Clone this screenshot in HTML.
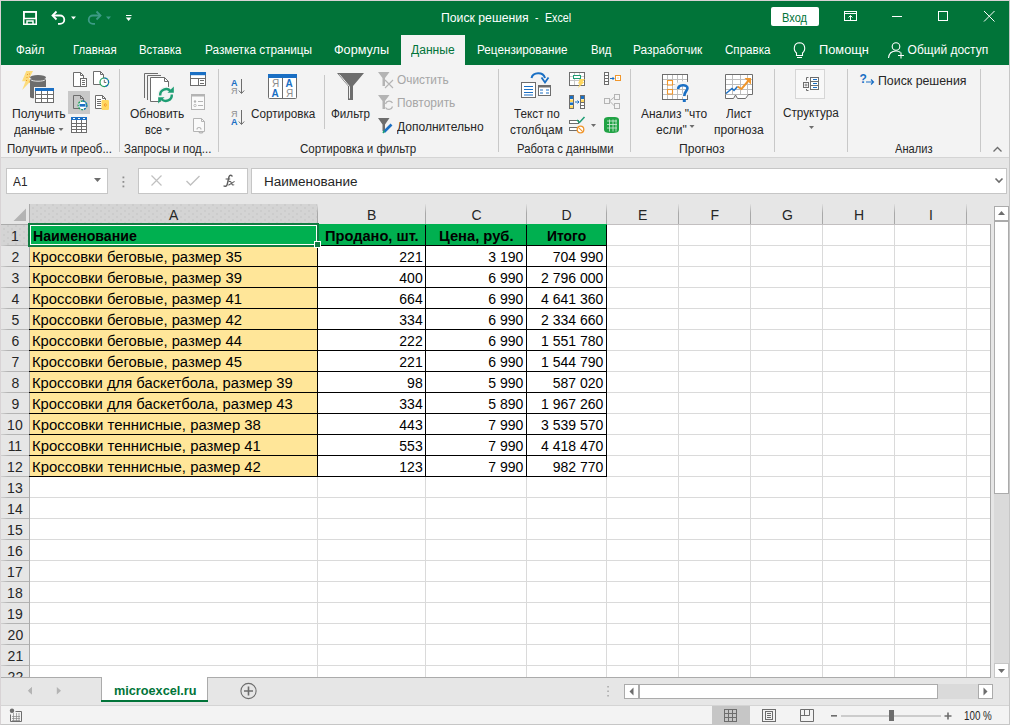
<!DOCTYPE html>
<html><head><meta charset="utf-8"><title>Excel</title><style>
*{margin:0;padding:0;box-sizing:border-box}
html,body{width:1010px;height:725px;overflow:hidden;background:#f3f3f3;font-family:"Liberation Sans",sans-serif}
.a{position:absolute}
.t{position:absolute;white-space:pre;line-height:1.117;transform-origin:0 0}
</style></head>
<body>
<div class="a" style="left:0px;top:0px;width:1010px;height:725px;background:#f3f3f3;border:1px solid #d8d3d5;border-right-color:#c6c6c6;border-bottom-color:#c6c6c6"></div>
<div class="a" style="left:1px;top:1px;width:1008px;height:64px;background:#017439"></div>
<div class="a" style="left:401px;top:35px;width:64px;height:30px;background:#f3f3f3"></div>
<div class="a" style="left:771px;top:7px;width:48px;height:19px;background:#fff;border-radius:2px"></div>
<div class="a" style="left:1px;top:157px;width:1008px;height:1px;background:#d4d4d4"></div>
<div class="a" style="left:1px;top:158px;width:1008px;height:519px;background:#e6e6e6"></div>
<div class="a" style="left:119px;top:69px;width:1px;height:83px;background:#c8c8c8"></div>
<div class="a" style="left:218px;top:69px;width:1px;height:83px;background:#c8c8c8"></div>
<div class="a" style="left:498px;top:69px;width:1px;height:83px;background:#c8c8c8"></div>
<div class="a" style="left:630px;top:69px;width:1px;height:83px;background:#c8c8c8"></div>
<div class="a" style="left:774px;top:69px;width:1px;height:83px;background:#c8c8c8"></div>
<div class="a" style="left:847px;top:69px;width:1px;height:83px;background:#c8c8c8"></div>
<div class="a" style="left:980px;top:69px;width:1px;height:83px;background:#c8c8c8"></div>
<div class="a" style="left:324px;top:75px;width:1px;height:54px;background:#c8c8c8"></div>
<div class="a" style="left:6px;top:168px;width:102px;height:26px;background:#fff;border:1px solid #c6c6c6"></div>
<div class="a" style="left:138px;top:168px;width:110px;height:26px;background:#fff;border:1px solid #c6c6c6"></div>
<div class="a" style="left:251px;top:168px;width:756px;height:26px;background:#fff;border:1px solid #c6c6c6"></div>
<div class="a" style="left:30px;top:225px;width:960px;height:452px;background:#fff"></div>
<div class="a" style="left:30px;top:204px;width:287px;height:20px;background-color:#d4d4d4;background-image:radial-gradient(circle at 1px 1px,#c2c2c2 0.6px,transparent 0.8px),radial-gradient(circle at 1px 1px,#c2c2c2 0.6px,transparent 0.8px);background-size:8px 6px,8px 6px;background-position:2px 3px,6px 6px"></div>
<div class="a" style="left:1px;top:225px;width:28px;height:20px;background-color:#d4d4d4;background-image:radial-gradient(circle at 1px 1px,#c2c2c2 0.6px,transparent 0.8px),radial-gradient(circle at 1px 1px,#c2c2c2 0.6px,transparent 0.8px);background-size:8px 6px,8px 6px;background-position:2px 3px,6px 6px"></div>
<div class="a" style="left:317px;top:225px;width:1px;height:452px;background:#dadada"></div>
<div class="a" style="left:317px;top:204px;width:1px;height:20px;background:linear-gradient(#e0e0e0,#a8a8a8 45%,#a8a8a8)"></div>
<div class="a" style="left:425px;top:225px;width:1px;height:452px;background:#dadada"></div>
<div class="a" style="left:425px;top:204px;width:1px;height:20px;background:linear-gradient(#e0e0e0,#a8a8a8 45%,#a8a8a8)"></div>
<div class="a" style="left:526px;top:225px;width:1px;height:452px;background:#dadada"></div>
<div class="a" style="left:526px;top:204px;width:1px;height:20px;background:linear-gradient(#e0e0e0,#a8a8a8 45%,#a8a8a8)"></div>
<div class="a" style="left:606px;top:225px;width:1px;height:452px;background:#dadada"></div>
<div class="a" style="left:606px;top:204px;width:1px;height:20px;background:linear-gradient(#e0e0e0,#a8a8a8 45%,#a8a8a8)"></div>
<div class="a" style="left:678px;top:225px;width:1px;height:452px;background:#dadada"></div>
<div class="a" style="left:678px;top:204px;width:1px;height:20px;background:linear-gradient(#e0e0e0,#a8a8a8 45%,#a8a8a8)"></div>
<div class="a" style="left:750px;top:225px;width:1px;height:452px;background:#dadada"></div>
<div class="a" style="left:750px;top:204px;width:1px;height:20px;background:linear-gradient(#e0e0e0,#a8a8a8 45%,#a8a8a8)"></div>
<div class="a" style="left:822px;top:225px;width:1px;height:452px;background:#dadada"></div>
<div class="a" style="left:822px;top:204px;width:1px;height:20px;background:linear-gradient(#e0e0e0,#a8a8a8 45%,#a8a8a8)"></div>
<div class="a" style="left:894px;top:225px;width:1px;height:452px;background:#dadada"></div>
<div class="a" style="left:894px;top:204px;width:1px;height:20px;background:linear-gradient(#e0e0e0,#a8a8a8 45%,#a8a8a8)"></div>
<div class="a" style="left:966px;top:225px;width:1px;height:452px;background:#dadada"></div>
<div class="a" style="left:966px;top:204px;width:1px;height:20px;background:linear-gradient(#e0e0e0,#a8a8a8 45%,#a8a8a8)"></div>
<div class="a" style="left:30px;top:245px;width:960px;height:1px;background:#dadada"></div>
<div class="a" style="left:1px;top:245px;width:28px;height:1px;background:linear-gradient(90deg,#d0d0d0,#b4b4b4 25%,#b4b4b4)"></div>
<div class="a" style="left:30px;top:266px;width:960px;height:1px;background:#dadada"></div>
<div class="a" style="left:1px;top:266px;width:28px;height:1px;background:linear-gradient(90deg,#d0d0d0,#b4b4b4 25%,#b4b4b4)"></div>
<div class="a" style="left:30px;top:287px;width:960px;height:1px;background:#dadada"></div>
<div class="a" style="left:1px;top:287px;width:28px;height:1px;background:linear-gradient(90deg,#d0d0d0,#b4b4b4 25%,#b4b4b4)"></div>
<div class="a" style="left:30px;top:308px;width:960px;height:1px;background:#dadada"></div>
<div class="a" style="left:1px;top:308px;width:28px;height:1px;background:linear-gradient(90deg,#d0d0d0,#b4b4b4 25%,#b4b4b4)"></div>
<div class="a" style="left:30px;top:329px;width:960px;height:1px;background:#dadada"></div>
<div class="a" style="left:1px;top:329px;width:28px;height:1px;background:linear-gradient(90deg,#d0d0d0,#b4b4b4 25%,#b4b4b4)"></div>
<div class="a" style="left:30px;top:350px;width:960px;height:1px;background:#dadada"></div>
<div class="a" style="left:1px;top:350px;width:28px;height:1px;background:linear-gradient(90deg,#d0d0d0,#b4b4b4 25%,#b4b4b4)"></div>
<div class="a" style="left:30px;top:371px;width:960px;height:1px;background:#dadada"></div>
<div class="a" style="left:1px;top:371px;width:28px;height:1px;background:linear-gradient(90deg,#d0d0d0,#b4b4b4 25%,#b4b4b4)"></div>
<div class="a" style="left:30px;top:392px;width:960px;height:1px;background:#dadada"></div>
<div class="a" style="left:1px;top:392px;width:28px;height:1px;background:linear-gradient(90deg,#d0d0d0,#b4b4b4 25%,#b4b4b4)"></div>
<div class="a" style="left:30px;top:413px;width:960px;height:1px;background:#dadada"></div>
<div class="a" style="left:1px;top:413px;width:28px;height:1px;background:linear-gradient(90deg,#d0d0d0,#b4b4b4 25%,#b4b4b4)"></div>
<div class="a" style="left:30px;top:434px;width:960px;height:1px;background:#dadada"></div>
<div class="a" style="left:1px;top:434px;width:28px;height:1px;background:linear-gradient(90deg,#d0d0d0,#b4b4b4 25%,#b4b4b4)"></div>
<div class="a" style="left:30px;top:455px;width:960px;height:1px;background:#dadada"></div>
<div class="a" style="left:1px;top:455px;width:28px;height:1px;background:linear-gradient(90deg,#d0d0d0,#b4b4b4 25%,#b4b4b4)"></div>
<div class="a" style="left:30px;top:476px;width:960px;height:1px;background:#dadada"></div>
<div class="a" style="left:1px;top:476px;width:28px;height:1px;background:linear-gradient(90deg,#d0d0d0,#b4b4b4 25%,#b4b4b4)"></div>
<div class="a" style="left:30px;top:497px;width:960px;height:1px;background:#dadada"></div>
<div class="a" style="left:1px;top:497px;width:28px;height:1px;background:linear-gradient(90deg,#d0d0d0,#b4b4b4 25%,#b4b4b4)"></div>
<div class="a" style="left:30px;top:518px;width:960px;height:1px;background:#dadada"></div>
<div class="a" style="left:1px;top:518px;width:28px;height:1px;background:linear-gradient(90deg,#d0d0d0,#b4b4b4 25%,#b4b4b4)"></div>
<div class="a" style="left:30px;top:539px;width:960px;height:1px;background:#dadada"></div>
<div class="a" style="left:1px;top:539px;width:28px;height:1px;background:linear-gradient(90deg,#d0d0d0,#b4b4b4 25%,#b4b4b4)"></div>
<div class="a" style="left:30px;top:560px;width:960px;height:1px;background:#dadada"></div>
<div class="a" style="left:1px;top:560px;width:28px;height:1px;background:linear-gradient(90deg,#d0d0d0,#b4b4b4 25%,#b4b4b4)"></div>
<div class="a" style="left:30px;top:581px;width:960px;height:1px;background:#dadada"></div>
<div class="a" style="left:1px;top:581px;width:28px;height:1px;background:linear-gradient(90deg,#d0d0d0,#b4b4b4 25%,#b4b4b4)"></div>
<div class="a" style="left:30px;top:602px;width:960px;height:1px;background:#dadada"></div>
<div class="a" style="left:1px;top:602px;width:28px;height:1px;background:linear-gradient(90deg,#d0d0d0,#b4b4b4 25%,#b4b4b4)"></div>
<div class="a" style="left:30px;top:623px;width:960px;height:1px;background:#dadada"></div>
<div class="a" style="left:1px;top:623px;width:28px;height:1px;background:linear-gradient(90deg,#d0d0d0,#b4b4b4 25%,#b4b4b4)"></div>
<div class="a" style="left:30px;top:644px;width:960px;height:1px;background:#dadada"></div>
<div class="a" style="left:1px;top:644px;width:28px;height:1px;background:linear-gradient(90deg,#d0d0d0,#b4b4b4 25%,#b4b4b4)"></div>
<div class="a" style="left:30px;top:665px;width:960px;height:1px;background:#dadada"></div>
<div class="a" style="left:1px;top:665px;width:28px;height:1px;background:linear-gradient(90deg,#d0d0d0,#b4b4b4 25%,#b4b4b4)"></div>
<div class="a" style="left:30px;top:686px;width:960px;height:1px;background:#dadada"></div>
<div class="a" style="left:1px;top:686px;width:28px;height:1px;background:linear-gradient(90deg,#d0d0d0,#b4b4b4 25%,#b4b4b4)"></div>
<div class="a" style="left:1px;top:224px;width:989px;height:1px;background:#c2bfc0"></div>
<div class="a" style="left:1px;top:224px;width:28px;height:1px;background:#ababab"></div>
<div class="a" style="left:29px;top:204px;width:1px;height:473px;background:#ababab"></div>
<div class="a" style="left:990px;top:224px;width:1px;height:453px;background:#ababab"></div>
<div class="a" style="left:29px;top:224px;width:578px;height:22px;background:#00b050"></div>
<div class="a" style="left:30px;top:246px;width:287px;height:231px;background:#ffe699"></div>
<div class="a" style="left:29px;top:245px;width:578px;height:1px;background:#000"></div>
<div class="a" style="left:29px;top:266px;width:578px;height:1px;background:#000"></div>
<div class="a" style="left:29px;top:287px;width:578px;height:1px;background:#000"></div>
<div class="a" style="left:29px;top:308px;width:578px;height:1px;background:#000"></div>
<div class="a" style="left:29px;top:329px;width:578px;height:1px;background:#000"></div>
<div class="a" style="left:29px;top:350px;width:578px;height:1px;background:#000"></div>
<div class="a" style="left:29px;top:371px;width:578px;height:1px;background:#000"></div>
<div class="a" style="left:29px;top:392px;width:578px;height:1px;background:#000"></div>
<div class="a" style="left:29px;top:413px;width:578px;height:1px;background:#000"></div>
<div class="a" style="left:29px;top:434px;width:578px;height:1px;background:#000"></div>
<div class="a" style="left:29px;top:455px;width:578px;height:1px;background:#000"></div>
<div class="a" style="left:29px;top:476px;width:578px;height:1px;background:#000"></div>
<div class="a" style="left:317px;top:225px;width:1px;height:252px;background:#000"></div>
<div class="a" style="left:425px;top:225px;width:1px;height:252px;background:#000"></div>
<div class="a" style="left:526px;top:225px;width:1px;height:252px;background:#000"></div>
<div class="a" style="left:606px;top:225px;width:1px;height:252px;background:#000"></div>
<div class="a" style="left:28px;top:223px;width:291px;height:24px;border:2px solid #107c41;"></div>
<div class="a" style="left:30px;top:225px;width:287px;height:20px;border:1px solid #fff"></div>
<div class="a" style="left:315px;top:242px;width:5px;height:5px;background:#107c41;outline:1px solid #fff"></div>
<svg class="a" style="left:0;top:196px" width="30" height="28"><path d="M13.5 25 L26 12.5 L26 25 Z" fill="#b4b4b4"/></svg>
<div class="a" style="left:994px;top:206px;width:15px;height:471px;background:#dadada"></div>
<div class="a" style="left:994px;top:206px;width:15px;height:15px;background:#fff;border:1px solid #ababab"></div>
<div class="a" style="left:994px;top:221px;width:15px;height:273px;background:#fff;border:1px solid #ababab"></div>
<div class="a" style="left:994px;top:663px;width:15px;height:15px;background:#fff;border:1px solid #c6c6c6"></div>
<div class="a" style="left:1px;top:677px;width:990px;height:1px;background:#ababab"></div>
<div class="a" style="left:1px;top:678px;width:1008px;height:27px;background:#e6e6e6"></div>
<div class="a" style="left:991px;top:677px;width:3px;height:1px;background:#e6e6e6"></div>
<div class="a" style="left:101px;top:677px;width:107px;height:25px;background:#fff;border:1px solid #ababab;border-top:none"></div>
<div class="a" style="left:101px;top:700px;width:107px;height:2px;background:#017439"></div>
<div class="a" style="left:624px;top:684px;width:369px;height:15px;background:#dadada"></div>
<div class="a" style="left:624px;top:684px;width:15px;height:15px;background:#fff;border:1px solid #ababab"></div>
<div class="a" style="left:639px;top:684px;width:299px;height:15px;background:#fff;border:1px solid #ababab"></div>
<div class="a" style="left:978px;top:684px;width:15px;height:15px;background:#fff;border:1px solid #ababab"></div>
<div class="a" style="left:1px;top:705px;width:1008px;height:1px;background:#d4d4d4"></div>
<div class="a" style="left:1px;top:706px;width:1008px;height:18px;background:#f3f3f3"></div>
<div class="a" style="left:712px;top:706px;width:38px;height:18px;background:#c6c6c6"></div>
<svg class="a" style="left:0;top:0" width="1010" height="725"><rect x="23.75" y="11.75" width="12.5" height="12.5" fill="none" stroke="#ffffff" stroke-width="1.5"/><rect x="24" y="12" width="12" height="6.5" fill="none" stroke="#ffffff" stroke-width="1.5"/><path d="M27 25 V21 H33 V25" fill="none" stroke="#ffffff" stroke-width="1.5"/><path d="M53 15.5 H60 A4.3 4.2 0 0 1 60 23.9 H58" fill="none" stroke="#ffffff" stroke-width="1.8"/><path d="M56.5 11.5 L52.5 15.5 L56.5 19.5" fill="none" stroke="#ffffff" stroke-width="1.8"/><path d="M71 16.5 H76 L73.5 19.5 Z" fill="#ffffff"/><path d="M100 15.5 H93 A4.3 4.2 0 0 0 93 23.9 H95" fill="none" stroke="#3d9b86" stroke-width="1.8"/><path d="M96.5 11.5 L100.5 15.5 L96.5 19.5" fill="none" stroke="#3d9b86" stroke-width="1.8"/><path d="M106 16.5 H111 L108.5 19.5 Z" fill="#3d9b86"/><rect x="126" y="15" width="5.5" height="1" fill="#ffffff"/><path d="M125.8 17.5 H131.5 L128.65 21 Z" fill="#ffffff"/><rect x="844.5" y="11.5" width="12" height="9" fill="none" stroke="#ffffff" stroke-width="1"/><rect x="844.5" y="13" width="12" height="1" fill="#ffffff"/><path d="M850.5 20 V15.5 M848.5 17.5 L850.5 15.5 L852.5 17.5" fill="none" stroke="#ffffff" stroke-width="1"/><rect x="892" y="16" width="10" height="1" fill="#ffffff"/><rect x="938.5" y="11.5" width="9" height="9" fill="none" stroke="#ffffff" stroke-width="1"/><path d="M984 11 L994.5 21.5 M994.5 11 L984 21.5" fill="none" stroke="#ffffff" stroke-width="1"/><path d="M796.5 53 C793 50 793.5 43 799.5 42.8 C805.5 43 806 50 802.5 53 V55.5 H796.5 Z" fill="none" stroke="#ffffff" stroke-width="1.1"/><path d="M797 57.5 H802" stroke="#ffffff" stroke-width="1"/><circle cx="896" cy="46.5" r="3.8" fill="none" stroke="#ffffff" stroke-width="1.1"/><path d="M888.5 58 C889 53 892 51 896 51 C898 51 899.5 51.5 900.5 52.5" fill="none" stroke="#ffffff" stroke-width="1.1"/><path d="M898 55.5 H904 M901 52.5 V58.5" stroke="#ffffff" stroke-width="1.1"/><path d="M26.3 71 H33 L28.8 79.3 H32.5 L22.2 90 L25.6 81.2 H22 Z" fill="#fcdc7c"/><rect x="27" y="74" width="1" height="1" fill="#f0962c"/><rect x="29" y="73.5" width="1" height="1" fill="#f0962c"/><rect x="26.5" y="77" width="1" height="1" fill="#f0962c"/><rect x="29" y="76.5" width="1" height="1" fill="#f0962c"/><rect x="26" y="80" width="1" height="1" fill="#f0962c"/><rect x="29" y="81.5" width="1" height="1" fill="#f0962c"/><path d="M30 79 V97 C30 99 46 99 46 97 V79 Z" fill="#6d6d6d"/><ellipse cx="38" cy="77.5" rx="8" ry="2.6" fill="#6d6d6d"/><path d="M30.5 79.5 C32 81.8 44 81.8 45.5 79.5" fill="none" stroke="#fff" stroke-width="0.8"/><rect x="34" y="87" width="21" height="17" fill="#f3f3f3"/><rect x="35.5" y="88.5" width="18" height="14" fill="#fff" stroke="#6d6d6d" stroke-width="1"/><rect x="35" y="88" width="19" height="3" fill="#1a6fc4"/><path d="M41.5 91 V102 M47.5 91 V102 M36 94.5 H53 M36 98.5 H53" stroke="#6d6d6d" stroke-width="1"/><path d="M73.5 72.5 H80.5 L83.5 75.5 V86.5 H73.5 Z" fill="#fff" stroke="#6d6d6d" stroke-width="1"/><path d="M80.5 72.5 V75.5 H83.5" fill="none" stroke="#6d6d6d" stroke-width="1"/><rect x="80.5" y="78.5" width="6" height="8" fill="#fff" stroke="#6d6d6d" stroke-width="1"/><path d="M82 80.5 H85 M82 82.5 H85 M82 84.5 H85" stroke="#6d6d6d" stroke-width="1"/><path d="M93.5 71.5 H100.5 L103.5 74.5 V84.5 H93.5 Z" fill="#fff" stroke="#6d6d6d" stroke-width="1"/><path d="M100.5 71.5 V74.5 H103.5" fill="none" stroke="#6d6d6d" stroke-width="1"/><circle cx="104.3" cy="82.3" r="4.3" fill="#fff" stroke="#21a05a" stroke-width="1.2"/><path d="M104.3 78 A4.3 4.3 0 0 1 104.3 86.6" fill="none" stroke="#1a6fc4" stroke-width="1.2" stroke-dasharray="3 1.5"/><path d="M104.3 79.8 V82.5 H106.3" fill="none" stroke="#6d6d6d" stroke-width="1"/><rect x="68" y="91" width="22" height="23" fill="#c8c8c8"/><path d="M73.5 95.5 H80.5 L83.5 98.5 V108.5 H73.5 Z" fill="#c8c8c8" stroke="#6d6d6d" stroke-width="1"/><path d="M80.5 95.5 V98.5 H83.5" fill="none" stroke="#6d6d6d" stroke-width="1"/><circle cx="82.5" cy="105.3" r="4.3" fill="#fff" stroke="#21a05a" stroke-width="1.3" stroke-dasharray="2 1"/><path d="M82.5 101 A4.3 4.3 0 0 1 82.5 109.6" fill="none" stroke="#1a6fc4" stroke-width="1.3" stroke-dasharray="2 1.2"/><rect x="79.5" y="104" width="6" height="2.6" fill="#1a6fc4"/><path d="M95.5 95.5 H102.5 L105.5 98.5 V108.5 H95.5 Z" fill="#fff" stroke="#6d6d6d" stroke-width="1"/><path d="M102.5 95.5 V98.5 H105.5" fill="none" stroke="#6d6d6d" stroke-width="1"/><path d="M97 99.5 H101 M97 101.5 H101 M97 103.5 H101 M97 105.5 H101" stroke="#6d6d6d" stroke-width="1"/><rect x="101.5" y="100" width="7.5" height="10" rx="1.2" fill="#ffd75e"/><path d="M105.3 103.5 L106.5 105 L105.3 106.5 L104.1 105 Z" fill="none" stroke="#f0962c" stroke-width="0.9"/><rect x="71.5" y="117.5" width="15" height="15" fill="#fff" stroke="#6d6d6d" stroke-width="1"/><rect x="71" y="117" width="16" height="3" fill="#1a6fc4"/><path d="M76.5 120 V132 M81.5 120 V132 M72 123.5 H86 M72 126.5 H86 M72 129.5 H86" stroke="#6d6d6d" stroke-width="1"/><path d="M73 118.5 H75 M78 118.5 H80 M83 118.5 H85" stroke="#fff" stroke-width="1"/><path d="M58.5 128 H63.5 L61.0 131 Z" fill="#6d6d6d"/><path d="M165 128 H170 L167.5 131 Z" fill="#6d6d6d"/><path d="M689.5 125 H694.5 L692.0 128 Z" fill="#6d6d6d"/><path d="M809 126 H814 L811.5 129 Z" fill="#6d6d6d"/><path d="M591 124 H596 L593.5 127 Z" fill="#6d6d6d"/><path d="M144.5 98 V73.5 H158" fill="none" stroke="#6d6d6d" stroke-width="1"/><path d="M147.5 100 V75.5 H161" fill="none" stroke="#6d6d6d" stroke-width="1"/><path d="M150.5 77.5 H164.5 L168.5 81.5 V101.5 H150.5 Z" fill="#fff" stroke="#6d6d6d" stroke-width="1"/><path d="M164.5 77.5 V81.5 H168.5" fill="none" stroke="#6d6d6d" stroke-width="1"/><circle cx="166" cy="95" r="8.5" fill="#f3f3f3"/><path d="M160.2 95.5 A6 6 0 0 1 170.6 91" fill="none" stroke="#1e9e74" stroke-width="2.4"/><path d="M171.8 94.5 A6 6 0 0 1 161.4 99" fill="none" stroke="#1e9e74" stroke-width="2.4"/><path d="M167.5 92.8 H173.8 V86.5 Z" fill="#1e9e74"/><path d="M164.5 97.2 H158.2 V103.5 Z" fill="#1e9e74"/><rect x="190.5" y="72.5" width="15" height="13" fill="#fff" stroke="#6d6d6d" stroke-width="1"/><rect x="190" y="72" width="16" height="3.2" fill="#1a6fc4"/><path d="M191 78.5 H205 M198.5 78.5 V85 M200 80.5 H204 M200 83.5 H204" stroke="#6d6d6d" stroke-width="1"/><rect x="191.5" y="94.5" width="13" height="15" fill="#fafafa" stroke="#b4b4b4" stroke-width="1"/><rect x="191" y="94" width="14" height="2.5" fill="#b4b4b4"/><path d="M198 101.5 H203 M198 105.5 H203" stroke="#b4b4b4" stroke-width="1"/><circle cx="195" cy="101.5" r="1.2" fill="#b4b4b4"/><circle cx="195" cy="105.5" r="1.2" fill="none" stroke="#b4b4b4" stroke-width="0.8"/><path d="M193.5 118.5 H201.5 L204.5 121.5 V131.5 H193.5 Z" fill="#fafafa" stroke="#b4b4b4" stroke-width="1"/><path d="M201.5 118.5 V121.5 H204.5" fill="none" stroke="#b4b4b4" stroke-width="1"/><path d="M197 129.5 A2 2 0 0 1 201 129.5 M199 131 A2 2 0 0 0 203 131" fill="none" stroke="#b4b4b4" stroke-width="1.2"/><text x="231" y="86" font-family="Liberation Sans" font-weight="700" font-size="9" fill="#1a6fc4">A</text><text x="231" y="94" font-family="Liberation Sans" font-size="9" fill="#8c8c8c">Я</text><path d="M241.5 79 V93 M238.8 90.5 L241.5 93.5 L244.2 90.5" fill="none" stroke="#6d6d6d" stroke-width="1"/><text x="231" y="116.5" font-family="Liberation Sans" font-size="9" fill="#8c8c8c">Я</text><text x="231" y="124.7" font-family="Liberation Sans" font-weight="700" font-size="9" fill="#1a6fc4">A</text><path d="M241.5 110 V124 M238.8 121.5 L241.5 124.5 L244.2 121.5" fill="none" stroke="#6d6d6d" stroke-width="1"/><rect x="268.5" y="74.5" width="28" height="24" rx="1" fill="#fff" stroke="#6d6d6d" stroke-width="1"/><rect x="268" y="74" width="29" height="4" fill="#1a6fc4"/><path d="M282.5 78 V98" stroke="#6d6d6d" stroke-width="1"/><text x="272" y="87" font-family="Liberation Sans" font-size="10" fill="#8c8c8c">Я</text><text x="271.5" y="97" font-family="Liberation Sans" font-weight="700" font-size="10" fill="#1a6fc4">A</text><text x="285.5" y="87" font-family="Liberation Sans" font-weight="700" font-size="10" fill="#1a6fc4">A</text><text x="286" y="97" font-family="Liberation Sans" font-size="10" fill="#8c8c8c">Я</text><path d="M337 73 H364 L353 86 V100 H348 V86 Z" fill="#6d6d6d"/><path d="M339.5 74.5 L349.5 86.5 V98.5" fill="none" stroke="#fff" stroke-width="0.9"/><path d="M378 72 H389.5 L385 78 V86 H382.5 V78 Z" fill="#b4b4b4"/><path d="M385 80 L393 88 M393 80 L385 88" stroke="#b4b4b4" stroke-width="1.1"/><path d="M378 95 H389.5 L385 101 V109 H382.5 V101 Z" fill="#b4b4b4"/><path d="M385.5 104 A3.8 3.8 0 0 1 392.5 103 M392.5 106.5 A3.8 3.8 0 0 1 385.5 107.5" fill="none" stroke="#b4b4b4" stroke-width="1.3"/><path d="M378 118 H389.5 L385 124.5 V131 H382.5 V124.5 Z" fill="#6d6d6d"/><path d="M384 132 L391.5 124.5" stroke="#1a6fc4" stroke-width="2.6"/><path d="M383 133 L384.5 130.5" stroke="#1e9e74" stroke-width="1.5"/><path d="M531.5 78 C533 72 543 71.5 545 78" fill="none" stroke="#1a6fc4" stroke-width="2"/><path d="M541.5 77.5 L545 82.5 L548.5 77.5" fill="none" stroke="#1a6fc4" stroke-width="1.8"/><rect x="521.5" y="82.5" width="14" height="15" fill="#fff" stroke="#6d6d6d" stroke-width="1"/><path d="M524 86.5 H533 M524 89.5 H533 M524 92.5 H533 M524 95 H533" stroke="#1a6fc4" stroke-width="1"/><rect x="538.5" y="85.5" width="12" height="10" fill="#fff" stroke="#6d6d6d" stroke-width="1"/><rect x="538" y="85" width="13" height="2.5" fill="#6d6d6d"/><path d="M540 90 H543 M546 90 H549 M540 93 H543 M546 93 H549" stroke="#1a6fc4" stroke-width="1"/><rect x="569.5" y="72.5" width="15" height="13" fill="#fff" stroke="#6d6d6d" stroke-width="1"/><path d="M570 76.5 H584 M570 80.5 H584 M574.5 73 V85 M579.5 73 V85" stroke="#c8c8c8" stroke-width="1"/><rect x="573.5" y="75.5" width="7" height="3" fill="#fff" stroke="#1e9e74" stroke-width="1"/><path d="M580 79 H585 L582.5 82 H584.5 L578 88 L580 83.5 H578 Z" fill="#ffd75e"/><rect x="569.5" y="95.5" width="4" height="13" fill="#fff" stroke="#6d6d6d" stroke-width="1"/><rect x="580.5" y="95.5" width="4" height="13" fill="#fff" stroke="#6d6d6d" stroke-width="1"/><rect x="570" y="96" width="3" height="3" fill="#1a6fc4"/><rect x="570" y="99.5" width="3" height="2.5" fill="#ffd75e"/><rect x="570" y="102.5" width="3" height="2.5" fill="#1a6fc4"/><rect x="570" y="105.5" width="3" height="2.5" fill="#ffd75e"/><rect x="581" y="96" width="3" height="3" fill="#1a6fc4"/><rect x="581" y="99.5" width="3" height="2.5" fill="#ffd75e"/><path d="M581 102.5 H584 M581 105.5 H584" stroke="#6d6d6d" stroke-width="1"/><path d="M575 102 H579 M577.5 100.5 L579 102 L577.5 103.5" fill="none" stroke="#1a6fc4" stroke-width="1"/><rect x="569.5" y="120.5" width="9" height="3" fill="#fff" stroke="#6d6d6d" stroke-width="1"/><rect x="569.5" y="127.5" width="9" height="3" fill="#fff" stroke="#6d6d6d" stroke-width="1"/><path d="M577 120 L579.5 122.5 L584.5 117" fill="none" stroke="#1e9e74" stroke-width="1.5"/><circle cx="580.5" cy="129.5" r="3.3" fill="#fff" stroke="#f0962c" stroke-width="1.3"/><path d="M578.3 127.3 L582.7 131.7" stroke="#f0962c" stroke-width="1.1"/><rect x="604.5" y="72.5" width="4" height="12" fill="#fff" stroke="#6d6d6d" stroke-width="1"/><path d="M605 75.5 H608 M605 78.5 H608 M605 81.5 H608" stroke="#6d6d6d" stroke-width="1"/><path d="M610 78.5 H614 M612.5 77 L614 78.5 L612.5 80" fill="none" stroke="#1a6fc4" stroke-width="1"/><rect x="615.5" y="75.5" width="5" height="5" fill="#fff" stroke="#f0962c" stroke-width="1"/><rect x="617.5" y="77.5" width="1" height="1" fill="#f0962c"/><rect x="604.5" y="98.5" width="5" height="5" fill="none" stroke="#b4b4b4" stroke-width="1"/><rect x="614.5" y="94.5" width="5" height="5" fill="none" stroke="#b4b4b4" stroke-width="1"/><rect x="614.5" y="103.5" width="5" height="5" fill="none" stroke="#b4b4b4" stroke-width="1"/><path d="M609.5 101 L614.5 97 M609.5 101 L614.5 106" fill="none" stroke="#b4b4b4" stroke-width="1"/><path d="M604 120 C604 117.5 606 117 611.5 117 C617 117 619 117.5 619 120 V129.5 C619 132 617 133 611.5 133 C606 133 604 132 604 129.5 Z" fill="#21a345"/><path d="M607 121 H617 M607 124.5 H617 M607 128 H617 M609.5 119.5 V131.5 M613 119.5 V131.5 M616 119.5 V131.5" stroke="#fff" stroke-width="0.8" opacity="0.8"/><rect x="662.5" y="74.5" width="25" height="25" fill="#fff" stroke="#6d6d6d" stroke-width="1"/><path d="M667.5 75 V99 M672.5 75 V99 M677.5 75 V99 M682.5 75 V99 M663 79.5 H687 M663 84.5 H687 M663 89.5 H687 M663 94.5 H687" stroke="#bdbdbd" stroke-width="1"/><rect x="667.5" y="80.5" width="5" height="4.5" fill="#fff" stroke="#f0962c" stroke-width="1.1"/><rect x="667.5" y="89.5" width="5" height="4.5" fill="#fff" stroke="#f0962c" stroke-width="1.1"/><path d="M676 89 C676 82 689.5 82 689.5 88 C689.5 92 684 92 684 97" fill="none" stroke="#f3f3f3" stroke-width="5"/><path d="M678.2 89 C678 84.5 687.5 84 687.5 88 C687.5 91 684.3 91.5 684.3 96" fill="none" stroke="#1a6fc4" stroke-width="2.6"/><rect x="682.8" y="99" width="3" height="3" fill="#1a6fc4"/><path d="M725.5 74.5 H752.5 V94.5 H725.5 Z" fill="#fff" stroke="#6d6d6d" stroke-width="1"/><path d="M732.5 75 V94 M740.5 75 V94 M747.5 75 V94 M726 79.5 H752 M726 84.5 H752 M726 89.5 H752" stroke="#bdbdbd" stroke-width="1"/><path d="M725.5 94.5 V98.5 H733.5 L735.5 95 L737.5 98.5 H745.5 L748.5 94.5" fill="#fff" stroke="#6d6d6d" stroke-width="1"/><path d="M726 93.5 L732 88.5 L734 90.5 L737.5 86.5" fill="none" stroke="#1a6fc4" stroke-width="1.5"/><path d="M737.5 86.5 L741.5 89 L749 80" fill="none" stroke="#f0962c" stroke-width="2"/><path d="M744.5 78 H751 V84.5 Z" fill="#f0962c"/><rect x="795.5" y="69.5" width="29" height="29" fill="#f8f8f8" stroke="#d6d6d6" stroke-width="1"/><rect x="803.5" y="82.5" width="5" height="5" fill="none" stroke="#6d6d6d" stroke-width="1"/><path d="M806 83.5 V86.5 M804.5 85 H807.5" stroke="#6d6d6d" stroke-width="0.8"/><path d="M808.5 77.5 H806.5 V80.5 M806.5 89 V90.5 H808.5" fill="none" stroke="#6d6d6d" stroke-width="1"/><rect x="810.5" y="77.5" width="8" height="12" fill="#fff" stroke="#6d6d6d" stroke-width="1"/><path d="M811 81.5 H818 M811 85.5 H818" stroke="#6d6d6d" stroke-width="1"/><path d="M813 79.5 H817 M813 83.5 H817 M813 87.5 H817" stroke="#1a6fc4" stroke-width="1.1"/><text x="859.5" y="83" font-family="Liberation Sans" font-weight="700" font-size="12" fill="#1a6fc4">?</text><path d="M866 82 H873.5 M871 79.5 L873.5 82 L871 84.5" fill="none" stroke="#1a6fc4" stroke-width="1.2"/><path d="M993.5 151.5 L997.5 147.5 L1001.5 151.5" fill="none" stroke="#6d6d6d" stroke-width="1.3"/><path d="M94 178 H101 L97.5 182 Z" fill="#6d6d6d"/><rect x="122.5" y="176.5" width="1.8" height="1.8" fill="#8e8e8e"/><rect x="122.5" y="181" width="1.8" height="1.8" fill="#8e8e8e"/><rect x="122.5" y="185.5" width="1.8" height="1.8" fill="#8e8e8e"/><path d="M151.5 175.5 L161.5 185.5 M161.5 175.5 L151.5 185.5" stroke="#c0c0c0" stroke-width="1.2"/><path d="M186.5 181 L190.5 185 L199.5 176" fill="none" stroke="#c0c0c0" stroke-width="1.4"/><path d="M232.3 176.6 C231.8 174.8 229.6 174.8 229 176.8 L227.2 184.5 C226.7 186.6 224.6 186.8 223.6 185.6" fill="none" stroke="#5f5f5f" stroke-width="1.4"/><path d="M225.6 179 H230.2" stroke="#5f5f5f" stroke-width="1.1"/><path d="M228.6 181.6 C230 181 230.8 181.6 231.3 182.8 L232 184.2 C232.4 185 233.3 185.2 234.2 184.6 M234.6 181.4 L228.4 185.2" fill="none" stroke="#5f5f5f" stroke-width="1.1"/><path d="M995.5 178.5 L999 182 L1002.5 178.5" fill="none" stroke="#6d6d6d" stroke-width="1.6"/><path d="M998 215 H1005 L1001.5 211 Z" fill="#6d6d6d"/><path d="M998 669 H1005 L1001.5 673 Z" fill="#6d6d6d"/><path d="M32 687 V694.5 L27.8 690.75 Z" fill="#b4b4b4"/><path d="M56.8 687 V694.5 L61 690.75 Z" fill="#b4b4b4"/><circle cx="248.5" cy="691" r="7.6" fill="none" stroke="#6d6d6d" stroke-width="1.1"/><path d="M248.5 686.5 V695.5 M244 691 H253" stroke="#6d6d6d" stroke-width="1.6"/><rect x="607.3" y="686" width="1.5" height="1.5" fill="#a6a6a6"/><rect x="607.3" y="690.5" width="1.5" height="1.5" fill="#a6a6a6"/><rect x="607.3" y="695" width="1.5" height="1.5" fill="#a6a6a6"/><path d="M633.5 687.5 V695.5 L629.5 691.5 Z" fill="#6d6d6d"/><path d="M983.5 687.5 V695.5 L987.5 691.5 Z" fill="#6d6d6d"/><circle cx="12" cy="710.8" r="2.2" fill="#6d6d6d"/><path d="M10.5 714.5 V721.5 H21.5 V711.5 H15.5" fill="none" stroke="#6d6d6d" stroke-width="1"/><path d="M12 716.5 H20 M12 718.5 H20 M12 720.5 H20 M13.5 713 V721 M16.5 713 V721 M19 713 V721" stroke="#6d6d6d" stroke-width="0.7" opacity="0.8"/><rect x="724.5" y="709.5" width="12" height="12" fill="none" stroke="#6d6d6d" stroke-width="1"/><path d="M728.5 710 V721 M732.5 710 V721 M725 713.5 H736 M725 717.5 H736" stroke="#6d6d6d" stroke-width="1"/><rect x="762.5" y="709.5" width="13" height="12" fill="none" stroke="#6d6d6d" stroke-width="1"/><rect x="765.5" y="711.5" width="7" height="8" fill="none" stroke="#6d6d6d" stroke-width="1"/><path d="M767 713.5 H771 M767 715.5 H771 M767 717.5 H771" stroke="#6d6d6d" stroke-width="1"/><path d="M800.5 709.5 H813.5 V721.5 H800.5 Z M804.5 710 V715.5 M800.5 715.5 H809.5 V710" fill="none" stroke="#6d6d6d" stroke-width="1"/><rect x="831" y="715" width="6" height="1.6" fill="#6d6d6d"/><rect x="841" y="715.5" width="100" height="1" fill="#a6a6a6"/><rect x="889" y="710" width="5" height="11" fill="#6d6d6d"/><path d="M944.5 716 H951.5 M948 712.5 V719.5" stroke="#6d6d6d" stroke-width="1.6"/></svg>
<span class="t" style="left:440.80px;top:12px;font-size:12px;color:#ffffff;transform:scaleX(1.0191)">Поиск решения</span>
<span class="t" style="left:535.00px;top:12px;font-size:12px;color:#ffffff;transform:scaleX(0.8500)">-</span>
<span class="t" style="left:545.00px;top:12px;font-size:12px;color:#ffffff;transform:scaleX(0.8892)">Excel</span>
<span class="t" style="left:782.00px;top:12px;font-size:12px;color:#017439;transform:scaleX(0.9210)">Вход</span>
<span class="t" style="left:16.20px;top:44px;font-size:12px;color:#ffffff;transform:scaleX(0.9661)">Файл</span>
<span class="t" style="left:72.80px;top:44px;font-size:12px;color:#ffffff;transform:scaleX(0.9563)">Главная</span>
<span class="t" style="left:138.70px;top:44px;font-size:12px;color:#ffffff;transform:scaleX(0.9482)">Вставка</span>
<span class="t" style="left:204.50px;top:44px;font-size:12px;color:#ffffff;transform:scaleX(0.9830)">Разметка страницы</span>
<span class="t" style="left:333.70px;top:44px;font-size:12px;color:#ffffff;transform:scaleX(1.0544)">Формулы</span>
<span class="t" style="left:477.30px;top:44px;font-size:12px;color:#ffffff;transform:scaleX(0.9765)">Рецензирование</span>
<span class="t" style="left:591.00px;top:44px;font-size:12px;color:#ffffff;transform:scaleX(0.9398)">Вид</span>
<span class="t" style="left:633.20px;top:44px;font-size:12px;color:#ffffff;transform:scaleX(0.9897)">Разработчик</span>
<span class="t" style="left:725.00px;top:44px;font-size:12px;color:#ffffff;transform:scaleX(0.9662)">Справка</span>
<span class="t" style="left:819.20px;top:44px;font-size:12px;color:#ffffff;transform:scaleX(1.0673)">Помощн</span>
<span class="t" style="left:907.60px;top:44px;font-size:12px;color:#ffffff">Общий доступ</span>
<span class="t" style="left:410.70px;top:44px;font-size:12px;color:#017439;transform:scaleX(1.0073)">Данные</span>
<span class="t" style="left:11.60px;top:108px;font-size:12px;color:#262626;transform:scaleX(1.0155)">Получить</span>
<span class="t" style="left:13.60px;top:124px;font-size:12px;color:#262626;transform:scaleX(0.9729)">данные</span>
<span class="t" style="left:7.00px;top:143px;font-size:12px;color:#262626;transform:scaleX(0.9590)">Получить и преоб...</span>
<span class="t" style="left:130.00px;top:108px;font-size:12px;color:#262626">Обновить</span>
<span class="t" style="left:144.60px;top:124px;font-size:12px;color:#262626;transform:scaleX(0.9044)">все</span>
<span class="t" style="left:124.00px;top:143px;font-size:12px;color:#262626;transform:scaleX(0.9525)">Запросы и под...</span>
<span class="t" style="left:250.70px;top:108px;font-size:12px;color:#262626;transform:scaleX(0.9760)">Сортировка</span>
<span class="t" style="left:331.00px;top:108px;font-size:12px;color:#262626;transform:scaleX(0.9695)">Фильтр</span>
<span class="t" style="left:396.50px;top:74px;font-size:12px;color:#a6a6a6;transform:scaleX(0.9868)">Очистить</span>
<span class="t" style="left:396.50px;top:97px;font-size:12px;color:#a6a6a6;transform:scaleX(0.9963)">Повторить</span>
<span class="t" style="left:396.50px;top:121px;font-size:12px;color:#262626;transform:scaleX(1.0035)">Дополнительно</span>
<span class="t" style="left:299.70px;top:143px;font-size:12px;color:#262626;transform:scaleX(0.9659)">Сортировка и фильтр</span>
<span class="t" style="left:513.60px;top:108px;font-size:12px;color:#262626;transform:scaleX(0.9778)">Текст по</span>
<span class="t" style="left:510.00px;top:124px;font-size:12px;color:#262626;transform:scaleX(0.9888)">столбцам</span>
<span class="t" style="left:516.50px;top:143px;font-size:12px;color:#262626;transform:scaleX(0.9395)">Работа с данными</span>
<span class="t" style="left:641.00px;top:108px;font-size:12px;color:#262626;transform:scaleX(0.9967)">Анализ "что</span>
<span class="t" style="left:655.50px;top:124px;font-size:12px;color:#262626;transform:scaleX(1.0040)">если"</span>
<span class="t" style="left:726.00px;top:108px;font-size:12px;color:#262626;transform:scaleX(0.9782)">Лист</span>
<span class="t" style="left:714.00px;top:124px;font-size:12px;color:#262626">прогноза</span>
<span class="t" style="left:679.00px;top:143px;font-size:12px;color:#262626;transform:scaleX(1.0106)">Прогноз</span>
<span class="t" style="left:783.00px;top:107px;font-size:12px;color:#262626;transform:scaleX(0.9781)">Структура</span>
<span class="t" style="left:878.00px;top:75px;font-size:12px;color:#262626;transform:scaleX(1.0285)">Поиск решения</span>
<span class="t" style="left:894.70px;top:143px;font-size:12px;color:#262626;transform:scaleX(0.9266)">Анализ</span>
<span class="t" style="left:13.40px;top:176px;font-size:12px;color:#262626;transform:scaleX(0.9864)">A1</span>
<span class="t" style="left:263.70px;top:176px;font-size:12px;color:#262626;transform:scaleX(1.1256)">Наименование</span>
<span class="t" style="left:113.50px;top:685px;font-size:12px;color:#017439;font-weight:700;transform:scaleX(1.0565)">microexcel.ru</span>
<span class="t" style="left:964.20px;top:710px;font-size:12px;color:#262626;transform:scaleX(0.8179)">100 %</span>
<span class="t" style="left:169.00px;top:208px;font-size:14px;color:#262626">A</span>
<span class="t" style="left:367.00px;top:208px;font-size:14px;color:#262626">B</span>
<span class="t" style="left:471.50px;top:208px;font-size:14px;color:#262626">C</span>
<span class="t" style="left:561.50px;top:208px;font-size:14px;color:#262626">D</span>
<span class="t" style="left:638.00px;top:208px;font-size:14px;color:#262626">E</span>
<span class="t" style="left:710.50px;top:208px;font-size:14px;color:#262626">F</span>
<span class="t" style="left:782.00px;top:208px;font-size:14px;color:#262626">G</span>
<span class="t" style="left:854.00px;top:208px;font-size:14px;color:#262626">H</span>
<span class="t" style="left:929.00px;top:208px;font-size:14px;color:#262626">I</span>
<span class="t" style="left:11.00px;top:229px;font-size:14px;color:#262626">1</span>
<span class="t" style="left:11.50px;top:250px;font-size:14px;color:#262626">2</span>
<span class="t" style="left:11.50px;top:271px;font-size:14px;color:#262626">3</span>
<span class="t" style="left:11.50px;top:292px;font-size:14px;color:#262626">4</span>
<span class="t" style="left:11.50px;top:313px;font-size:14px;color:#262626">5</span>
<span class="t" style="left:11.50px;top:334px;font-size:14px;color:#262626">6</span>
<span class="t" style="left:11.50px;top:355px;font-size:14px;color:#262626">7</span>
<span class="t" style="left:11.50px;top:376px;font-size:14px;color:#262626">8</span>
<span class="t" style="left:11.50px;top:397px;font-size:14px;color:#262626">9</span>
<span class="t" style="left:7.11px;top:418px;font-size:14px;color:#262626">10</span>
<span class="t" style="left:7.63px;top:439px;font-size:14px;color:#262626">11</span>
<span class="t" style="left:7.11px;top:460px;font-size:14px;color:#262626">12</span>
<span class="t" style="left:7.11px;top:481px;font-size:14px;color:#262626">13</span>
<span class="t" style="left:7.11px;top:502px;font-size:14px;color:#262626">14</span>
<span class="t" style="left:7.11px;top:523px;font-size:14px;color:#262626">15</span>
<span class="t" style="left:7.11px;top:544px;font-size:14px;color:#262626">16</span>
<span class="t" style="left:7.11px;top:565px;font-size:14px;color:#262626">17</span>
<span class="t" style="left:7.11px;top:586px;font-size:14px;color:#262626">18</span>
<span class="t" style="left:7.11px;top:607px;font-size:14px;color:#262626">19</span>
<span class="t" style="left:7.61px;top:628px;font-size:14px;color:#262626">20</span>
<span class="t" style="left:7.61px;top:649px;font-size:14px;color:#262626">21</span>
<span class="t" style="left:7.61px;top:670px;font-size:14px;color:#262626">22</span>
<span class="t" style="left:33.30px;top:229px;font-size:14px;color:#000;font-weight:700;transform:scaleX(1.0105)">Наименование</span>
<span class="t" style="left:325.30px;top:229px;font-size:14px;color:#000;font-weight:700;transform:scaleX(1.0447)">Продано, шт.</span>
<span class="t" style="left:439.40px;top:229px;font-size:14px;color:#000;font-weight:700;transform:scaleX(1.0513)">Цена, руб.</span>
<span class="t" style="left:547.20px;top:229px;font-size:14px;color:#000;font-weight:700;transform:scaleX(0.9915)">Итого</span>
<span class="t" style="left:32.24px;top:250px;font-size:14px;color:#000;transform:scaleX(1.0560)">Кроссовки беговые, размер 35</span>
<span class="t" style="left:399.33px;top:250px;font-size:14px;color:#000">221</span>
<span class="t" style="left:488.35px;top:250px;font-size:14px;color:#000">3 190</span>
<span class="t" style="left:552.78px;top:250px;font-size:14px;color:#000">704 990</span>
<span class="t" style="left:32.24px;top:271px;font-size:14px;color:#000;transform:scaleX(1.0560)">Кроссовки беговые, размер 39</span>
<span class="t" style="left:399.33px;top:271px;font-size:14px;color:#000">400</span>
<span class="t" style="left:488.35px;top:271px;font-size:14px;color:#000">6 990</span>
<span class="t" style="left:541.10px;top:271px;font-size:14px;color:#000">2 796 000</span>
<span class="t" style="left:32.24px;top:292px;font-size:14px;color:#000;transform:scaleX(1.0560)">Кроссовки беговые, размер 41</span>
<span class="t" style="left:399.33px;top:292px;font-size:14px;color:#000">664</span>
<span class="t" style="left:488.35px;top:292px;font-size:14px;color:#000">6 990</span>
<span class="t" style="left:541.10px;top:292px;font-size:14px;color:#000">4 641 360</span>
<span class="t" style="left:32.24px;top:313px;font-size:14px;color:#000;transform:scaleX(1.0560)">Кроссовки беговые, размер 42</span>
<span class="t" style="left:399.33px;top:313px;font-size:14px;color:#000">334</span>
<span class="t" style="left:488.35px;top:313px;font-size:14px;color:#000">6 990</span>
<span class="t" style="left:541.10px;top:313px;font-size:14px;color:#000">2 334 660</span>
<span class="t" style="left:32.24px;top:334px;font-size:14px;color:#000;transform:scaleX(1.0560)">Кроссовки беговые, размер 44</span>
<span class="t" style="left:399.33px;top:334px;font-size:14px;color:#000">222</span>
<span class="t" style="left:488.35px;top:334px;font-size:14px;color:#000">6 990</span>
<span class="t" style="left:541.10px;top:334px;font-size:14px;color:#000">1 551 780</span>
<span class="t" style="left:32.24px;top:355px;font-size:14px;color:#000;transform:scaleX(1.0560)">Кроссовки беговые, размер 45</span>
<span class="t" style="left:399.33px;top:355px;font-size:14px;color:#000">221</span>
<span class="t" style="left:488.35px;top:355px;font-size:14px;color:#000">6 990</span>
<span class="t" style="left:541.10px;top:355px;font-size:14px;color:#000">1 544 790</span>
<span class="t" style="left:32.24px;top:376px;font-size:14px;color:#000;transform:scaleX(1.0560)">Кроссовки для баскетбола, размер 39</span>
<span class="t" style="left:407.11px;top:376px;font-size:14px;color:#000">98</span>
<span class="t" style="left:488.35px;top:376px;font-size:14px;color:#000">5 990</span>
<span class="t" style="left:552.78px;top:376px;font-size:14px;color:#000">587 020</span>
<span class="t" style="left:32.24px;top:397px;font-size:14px;color:#000;transform:scaleX(1.0560)">Кроссовки для баскетбола, размер 43</span>
<span class="t" style="left:399.33px;top:397px;font-size:14px;color:#000">334</span>
<span class="t" style="left:488.35px;top:397px;font-size:14px;color:#000">5 890</span>
<span class="t" style="left:541.10px;top:397px;font-size:14px;color:#000">1 967 260</span>
<span class="t" style="left:32.24px;top:418px;font-size:14px;color:#000;transform:scaleX(1.0640)">Кроссовки теннисные, размер 38</span>
<span class="t" style="left:399.33px;top:418px;font-size:14px;color:#000">443</span>
<span class="t" style="left:488.35px;top:418px;font-size:14px;color:#000">7 990</span>
<span class="t" style="left:541.10px;top:418px;font-size:14px;color:#000">3 539 570</span>
<span class="t" style="left:32.24px;top:439px;font-size:14px;color:#000;transform:scaleX(1.0640)">Кроссовки теннисные, размер 41</span>
<span class="t" style="left:399.33px;top:439px;font-size:14px;color:#000">553</span>
<span class="t" style="left:488.35px;top:439px;font-size:14px;color:#000">7 990</span>
<span class="t" style="left:541.10px;top:439px;font-size:14px;color:#000">4 418 470</span>
<span class="t" style="left:32.24px;top:460px;font-size:14px;color:#000;transform:scaleX(1.0640)">Кроссовки теннисные, размер 42</span>
<span class="t" style="left:399.33px;top:460px;font-size:14px;color:#000">123</span>
<span class="t" style="left:488.35px;top:460px;font-size:14px;color:#000">7 990</span>
<span class="t" style="left:552.78px;top:460px;font-size:14px;color:#000">982 770</span>
<div class="a" style="left:1px;top:677px;width:28px;height:1px;background:#ababab"></div>
<div class="a" style="left:1px;top:678px;width:28px;height:27px;background:#e6e6e6"></div><svg class="a" style="left:0;top:0" width="40" height="725"><path d="M32 687 V694.5 L27.8 690.75 Z" fill="#b4b4b4"/></svg>
</body></html>
